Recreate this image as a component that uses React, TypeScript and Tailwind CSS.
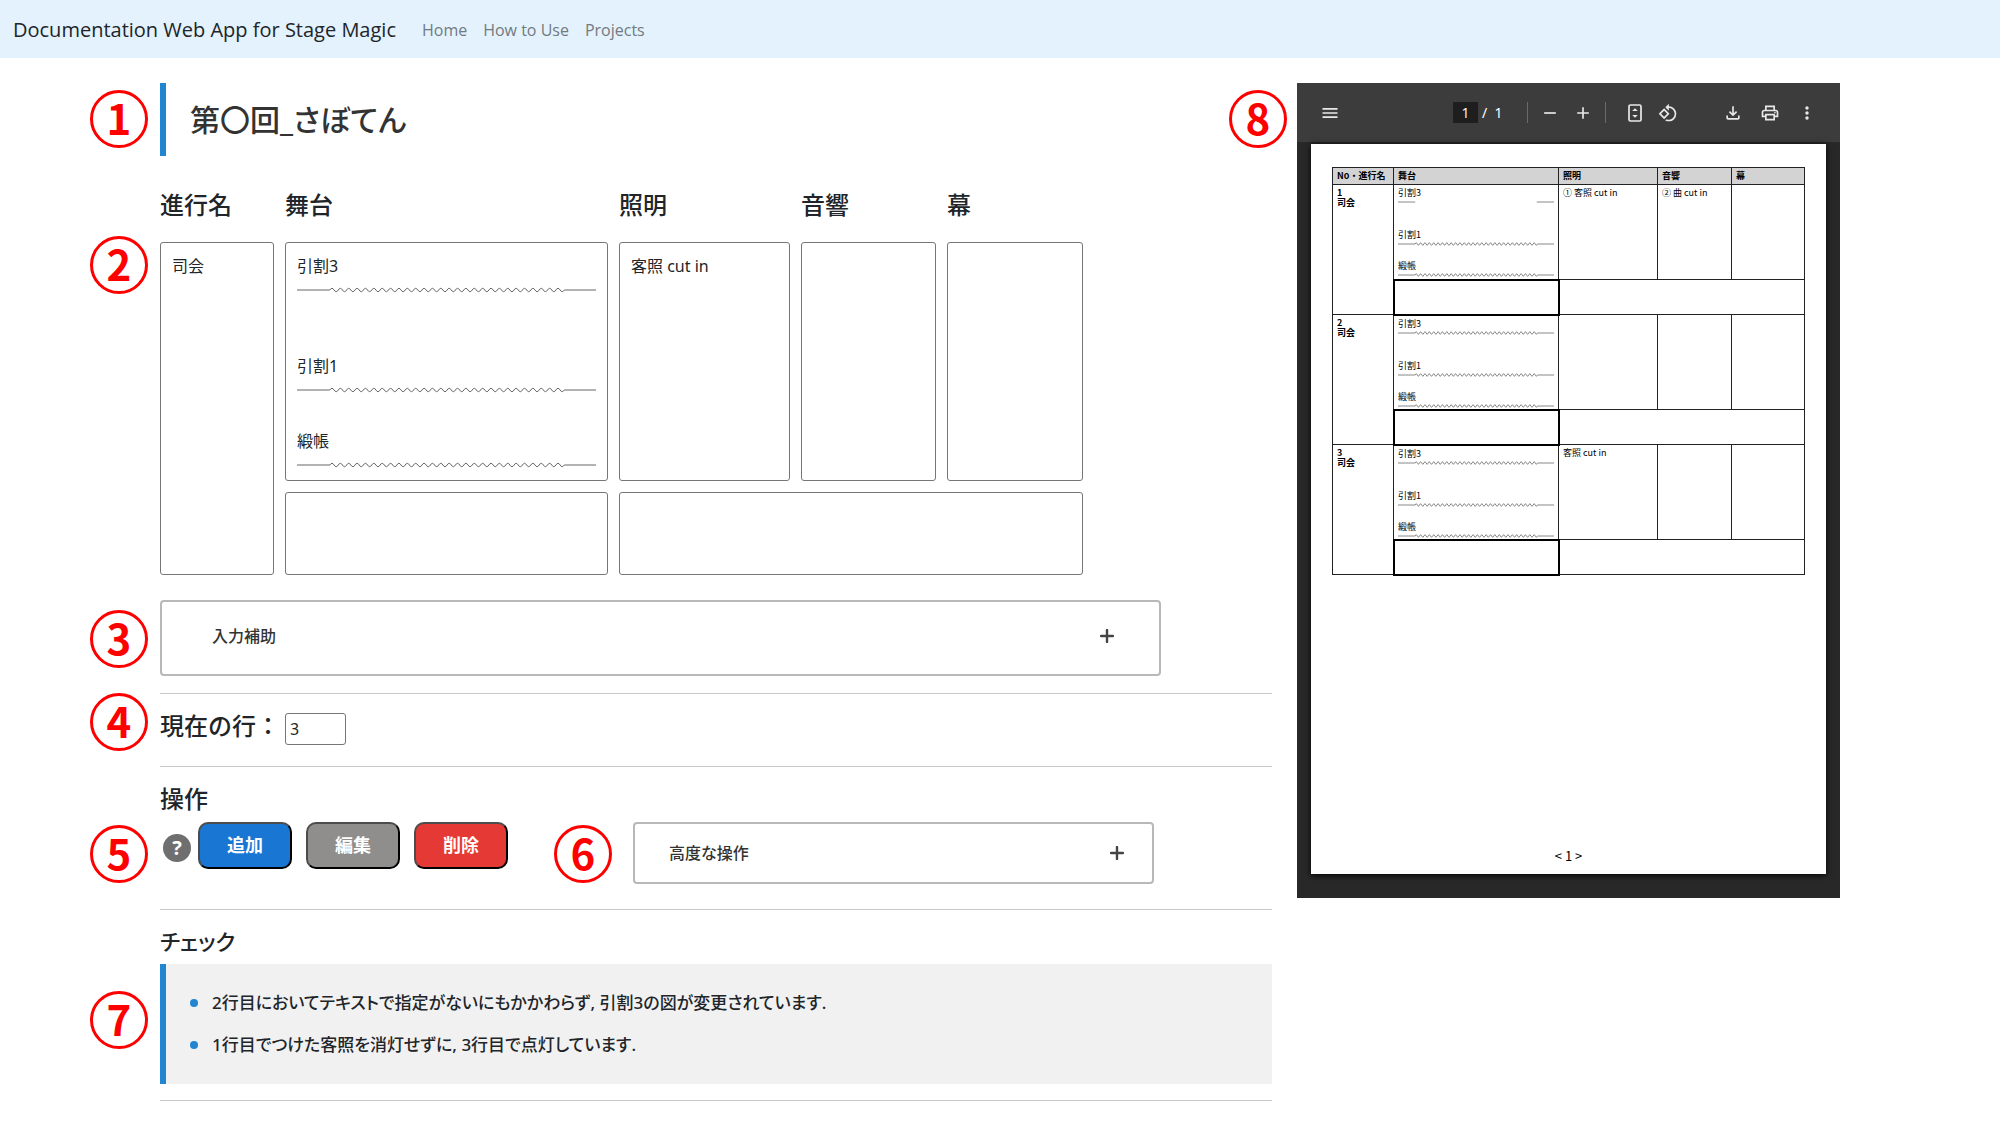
import React from "react";
import {
  MdAdd,
  MdMenu,
  MdMoreVert,
  MdOutlineFileDownload,
  MdOutlinePrint,
  MdRemove,
  MdRotate90DegreesCcw,
} from "react-icons/md";

function Marker({ n, className }: { n: number; className: string }) {
  return (
    <span
      aria-hidden="true"
      className={
        "pointer-events-none absolute flex size-[58px] items-center justify-center rounded-full border-[3px] border-[#ff0000] pb-1 text-[42px] leading-none font-bold text-[#ff0000] [font-family:'Noto_Sans_CJK_JP',sans-serif] " +
        className
      }
    >
      {n}
    </span>
  );
}

/** A curtain line: straight ends with a wavy or open middle part. */
function CurtainLine({ open = false, className }: { open?: boolean; className: string }) {
  let d = "M0 5H33";
  if (open) {
    d += "M267 5H300";
  } else {
    for (let i = 0; i < 28; i++) d += "q2.1 -3.4 4.2 0t4.2 0";
    d += "L300 5";
  }
  return (
    <svg viewBox="0 0 300 10" className={className} fill="none" stroke="currentColor" strokeWidth="1" preserveAspectRatio="none">
      <path d={d} vectorEffect="non-scaling-stroke" />
    </svg>
  );
}

const headings = [
  { id: "name", text: "進行名" },
  { id: "stage", text: "舞台" },
  { id: "light", text: "照明" },
  { id: "sound", text: "音響" },
  { id: "curtain", text: "幕" },
];

const columns = "grid grid-cols-[114fr_323fr_171fr_135fr_136fr] gap-[11px] w-[83%]";
const field =
  "block h-full w-full resize-none overflow-hidden rounded-[3px] border border-[#767676] bg-white px-[11px] py-[11px] text-base leading-[25px] text-[#212529]";

function Accordion({ label, className }: { label: string; className: string }) {
  return (
    <button
      type="button"
      aria-expanded="false"
      className={"flex items-center justify-between rounded border-2 border-[#b8b8b8] bg-white text-base font-medium text-[#333] " + className}
    >
      <span>{label}</span>
      <svg viewBox="0 0 14 14" className="size-3.5" stroke="#444" strokeWidth="2.4" strokeLinecap="round">
        <path d="M7 1V13M1 7H13" />
      </svg>
    </button>
  );
}

const actions = [
  { text: "追加", color: "bg-[#1976d2]" },
  { text: "編集", color: "bg-[#8f8e8c]" },
  { text: "削除", color: "bg-[#e53935]" },
];

const warnings = [
  "2行目においてテキストで指定がないにもかかわらず, 引割3の図が変更されています.",
  "1行目でつけた客照を消灯せずに, 3行目で点灯しています.",
];

const rows = [
  { no: 1, name: "司会", open: true, light: "① 客照 cut in", sound: "② 曲 cut in" },
  { no: 2, name: "司会", open: false, light: "", sound: "" },
  { no: 3, name: "司会", open: false, light: "客照 cut in", sound: "" },
];

const line = "border-t border-[#c8c8c8]";
const h2 = "text-2xl leading-9 font-medium";
const palt = "[font-feature-settings:'palt']";
const cell = "border border-[#222] px-1 pt-[3px] align-top";

function Preview() {
  const icon = "size-5 text-[#e8e8e8]";
  return (
    <aside className="relative bg-[#282828]">
      <Marker n={8} className="top-[7px] -left-[68px]" />
      <div className="flex h-[59px] items-center bg-[#3c3c3c] pr-[23px] pl-[23px]">
        <button type="button" aria-label="メニュー" className="mr-auto">
          <MdMenu className={icon} />
        </button>
        <div className="flex items-center text-sm text-white">
          <input
            aria-label="ページ"
            defaultValue="1"
            className="mr-1 h-[21px] w-[25px] bg-[#1e1e1e] text-center [font-family:'Open_Sans',sans-serif]"
          />
          <span className="w-[22px]">/&nbsp; 1</span>
          <span className="mr-3 ml-[23px] h-[21px] w-px bg-[#6b6b6b]" />
          <button type="button" aria-label="縮小" className="mr-[13px]"><MdRemove className={icon} /></button>
          <button type="button" aria-label="拡大" className="mr-3"><MdAdd className={icon} /></button>
          <span className="mr-[19px] h-[21px] w-px bg-[#6b6b6b]" />
          <button type="button" aria-label="ページに合わせる" className="mr-[13px]">
            <svg viewBox="0 0 20 20" className={icon} fill="none" stroke="currentColor" strokeWidth="1.7">
              <rect x="4" y="2" width="12" height="16" rx="1.5" />
              <path d="M7.2 8 10 5.2 12.8 8zM7.2 12 10 14.8 12.8 12z" fill="currentColor" stroke="none" />
            </svg>
          </button>
          <button type="button" aria-label="左に回転" className="mr-[45px]"><MdRotate90DegreesCcw className={icon} /></button>
        </div>
        <div className="flex items-center gap-[17px]">
          <button type="button" aria-label="ダウンロード"><MdOutlineFileDownload className={icon} /></button>
          <button type="button" aria-label="印刷"><MdOutlinePrint className={icon} /></button>
          <button type="button" aria-label="その他"><MdMoreVert className={icon} /></button>
        </div>
      </div>
      <div className="px-3.5 pt-0.5 pb-6">
        <div className="flex aspect-[516/731] flex-col bg-white px-[21px] pt-[23px] pb-[9px] text-black shadow-[0_1px_6px_#000]">
          <table className="w-full table-fixed border-collapse text-[9px] leading-[10px] [font-family:'Noto_Sans_CJK_JP',sans-serif]">
            <colgroup>
              <col className="w-[61px]" />
              <col className="w-[165px]" />
              <col className="w-[99px]" />
              <col className="w-[74px]" />
              <col />
            </colgroup>
            <thead>
              <tr className="h-[17px] bg-[#d3d3d3] text-left">
                {["No・進行名", "舞台", "照明", "音響", "幕"].map((t) => (
                  <th key={t} scope="col" className="border border-[#222] px-1 font-bold whitespace-nowrap">{t}</th>
                ))}
              </tr>
            </thead>
            {rows.map((r) => (
              <tbody key={r.no}>
                <tr className="h-[95px]">
                  <th scope="row" rowSpan={2} className={cell + " text-left font-bold"}>
                    {r.no}
                    <br />
                    {r.name}
                  </th>
                  <td className={cell}>
                    <div className="h-[42px]">
                      引割3
                      <CurtainLine open={r.open} className="block h-2 w-full text-[#888]" />
                    </div>
                    <div className="h-[31px]">
                      引割1
                      <CurtainLine className="block h-2 w-full text-[#888]" />
                    </div>
                    <div className="h-4">
                      緞帳
                      <CurtainLine className="block h-2 w-full text-[#888]" />
                    </div>
                  </td>
                  <td className={cell}>{r.light}</td>
                  <td className={cell}>{r.sound}</td>
                  <td className={cell} />
                </tr>
                <tr className="h-[35px]">
                  <td className="border-2 border-black" />
                  <td colSpan={3} className="border border-[#222]" />
                </tr>
              </tbody>
            ))}
          </table>
          <p className="mt-auto text-center text-[13px] leading-[18px] [font-family:'Noto_Sans_CJK_JP',sans-serif]">&lt; 1 &gt;</p>
        </div>
      </div>
    </aside>
  );
}

export default function App() {
  return (
    <div lang="ja" className="min-h-screen bg-white text-[#212529] [font-family:'Noto_Sans','Noto_Sans_CJK_JP',sans-serif]">
      <nav className="flex h-[58px] items-center bg-[#e3f2fd] px-[13px] pt-0.5 [font-family:'Open_Sans',sans-serif]">
        <a href="#" className="mr-[26px] text-xl">Documentation Web App for Stage Magic</a>
        <div className="flex gap-4 text-base text-[#737a80]">
          <a href="#home">Home</a>
          <a href="#how-to-use">How to Use</a>
          <a href="#projects">Projects</a>
        </div>
      </nav>

      <div className="grid grid-cols-[1112fr_543fr] items-start gap-[25px] px-40 pt-[25px]">
        <main>
          <div className="relative">
            <Marker n={1} className="top-[7px] -left-[70px]" />
            <h1 className={"flex h-[73px] items-center border-l-[6px] border-[#2185d0] pl-6 text-3xl font-medium text-[#333] " + palt}>第〇回_さぼてん</h1>
          </div>

          <section className="relative">
            <div className={columns + " mt-[31px] mb-[19px]"}>
              {headings.map((h) => (
                <h2 key={h.id} id={h.id} className={h2 + " whitespace-nowrap"}>{h.text}</h2>
              ))}
            </div>
            <Marker n={2} className="top-[49px] -left-[70px]" />
            <div className={columns + " grid-rows-[239px_83px]"}>
              <div className="row-span-2">
                <textarea aria-labelledby="name" className={field} defaultValue="司会" />
              </div>
              <div className="relative">
                <textarea aria-labelledby="stage" className={field} defaultValue={"引割3\n\n\n\n引割1\n\n\n緞帳"} />
                <div className="pointer-events-none absolute inset-x-3 top-[43px] text-[#666]">
                  <CurtainLine className="block h-2.5 w-full" />
                  <CurtainLine className="mt-[90px] block h-2.5 w-full" />
                  <CurtainLine className="mt-[65px] block h-2.5 w-full" />
                </div>
              </div>
              <textarea aria-labelledby="light" className={field} defaultValue="客照 cut in" />
              <textarea aria-labelledby="sound" className={field} />
              <textarea aria-labelledby="curtain" className={field} />
              <textarea aria-label="舞台メモ" className={field} />
              <div className="col-span-3">
                <textarea aria-label="備考" className={field} />
              </div>
            </div>
          </section>

          <div className="relative mt-[25px] mb-[17px]">
            <Marker n={3} className="top-2.5 -left-[70px]" />
            <Accordion label="入力補助" className="h-[76px] w-[90%] pr-[45px] pb-1 pl-[50px]" />
          </div>

          <section className={line + " relative flex items-center pt-[19px] pb-[21px]"}>
            <Marker n={4} className="-top-px -left-[70px]" />
            <label htmlFor="current-row" className="-my-2 w-[125px] pb-1.5 text-2xl leading-9 font-medium whitespace-nowrap">現在の行：</label>
            <input id="current-row" defaultValue="3" className="h-8 w-[61px] rounded-[3px] border border-[#767676] px-1 text-base" />
          </section>

          <section className={line + " pt-3.5 pb-[25px]"}>
            <h2 className={h2 + " mb-[5px]"}>操作</h2>
            <div className="relative flex items-start">
              <Marker n={5} className="top-[3px] -left-[70px]" />
              <button
                type="button"
                aria-label="ヘルプ"
                className="mt-3 ml-[3px] flex size-7 items-center justify-center rounded-full bg-[#6f6f6f] text-xl leading-none font-bold text-white"
              >
                ?
              </button>
              <div className="ml-[7px] flex gap-3.5">
                {actions.map((a) => (
                  <button
                    key={a.text}
                    type="button"
                    className={"h-[47px] w-[94px] rounded-[10px] border-2 border-t-[#4c4c4c] border-r-black border-b-black border-l-[#4c4c4c] pb-0.5 text-lg font-bold text-white " + a.color}
                  >
                    {a.text}
                  </button>
                ))}
              </div>
              <div className="relative mr-[118px] ml-auto w-[521px]">
                <Marker n={6} className="top-[3px] -left-[79px]" />
                <Accordion label="高度な操作" className={"h-[62px] w-full pr-[28px] pl-[34px] " + palt} />
              </div>
            </div>
          </section>

          <section className={line + " pt-[13px] pb-4"}>
            <h2 className={"mb-[5px] text-[22px] leading-9 font-medium " + palt}>チェック</h2>
            <div className="relative">
              <Marker n={7} className="top-[27px] -left-[70px]" />
              <ul className={"border-l-[6px] border-[#2185d0] bg-[#f1f1f1] py-[18px] pl-6 text-[17px] font-medium " + palt}>
                {warnings.map((w) => (
                  <li key={w} className="flex h-[42px] items-center gap-3.5">
                    <span className="size-2 rounded-full bg-[#2185d0]" />
                    {w}
                  </li>
                ))}
              </ul>
            </div>
          </section>
          <hr className="border-[#c8c8c8]" />
        </main>
        <Preview />
      </div>
    </div>
  );
}
